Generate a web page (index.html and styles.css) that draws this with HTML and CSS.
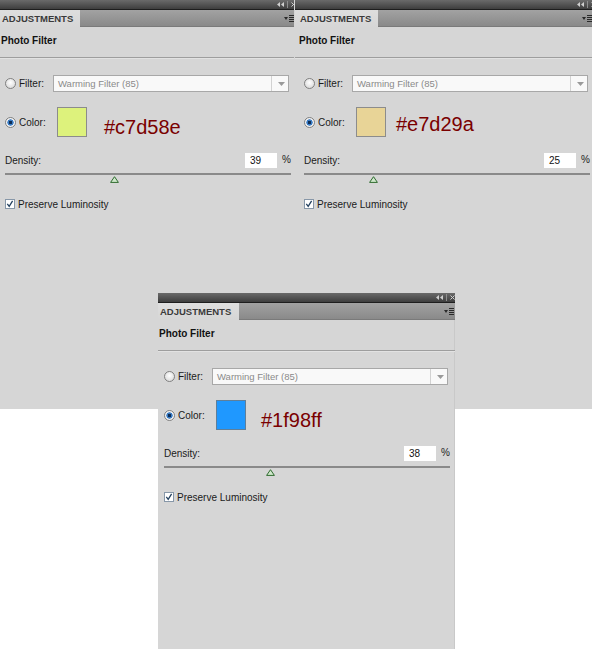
FILE: index.html
```html
<!DOCTYPE html>
<html>
<head>
<meta charset="utf-8">
<link rel="stylesheet" href="styles.css">
</head>
<body>
<div class="desk">
  <div class="top">
    <section class="panel panel--a">
      <div class="titlebar">
        <span class="tb-icons">
          <svg class="ico-collapse" width="7" height="5" viewBox="0 0 7 5"><polygon points="0,2.5 3,0 3,5"/><polygon points="4,2.5 7,0 7,5"/></svg>
          <span class="tb-sep"></span>
          <svg class="ico-close" width="5" height="5" viewBox="0 0 5 5"><path d="M0.5 0.5 L4.5 4.5 M4.5 0.5 L0.5 4.5"/></svg>
        </span>
      </div>
      <div class="tabrow">
        <div class="tab">ADJUSTMENTS</div>
        <div class="tabfill">
          <svg class="ico-menu" width="10" height="9" viewBox="0 0 10 9"><polygon points="0,3 4,3 2,6" class="m-tri"/><rect x="5" y="1" width="5" height="1"/><rect x="5" y="3" width="5" height="1"/><rect x="5" y="5" width="5" height="1"/><rect x="5" y="7" width="5" height="1"/></svg>
        </div>
      </div>
      <div class="head"><div class="title">Photo Filter</div></div>
      <div class="rule"></div>
      <div class="body">
        <div class="row row--filter">
          <span class="radio"></span><span class="label">Filter:</span>
          <div class="select"><span class="select-text">Warming Filter (85)</span><span class="select-arrow"><svg width="7" height="4" viewBox="0 0 7 4"><polygon points="0,0 7,0 3.5,4"/></svg></span></div>
        </div>
        <div class="row row--color">
          <span class="radio radio--on"></span><span class="label">Color:</span>
          <span class="swatch swatch--lime"></span>
          <span class="hex hex--a">#c7d58e</span>
        </div>
        <div class="row row--density">
          <span class="dens-label">Density:</span>
          <span class="dens-input">39</span>
          <span class="pct">%</span>
        </div>
        <div class="slider"><svg class="thumb" style="left:calc(39% - 7px)" width="9" height="7" viewBox="0 0 9 7"><polygon points="4.5,0.7 8.4,6.4 0.6,6.4"/></svg></div>
        <div class="row row--check">
          <span class="check"><svg width="8" height="8" viewBox="0 0 8 8"><path d="M1.3 3.8 L3.2 6.3 L6.6 0.8"/></svg></span>
          <span class="check-label">Preserve Luminosity</span>
        </div>
      </div>
    </section>

    <section class="panel panel--b">
      <div class="titlebar">
        <span class="tb-icons">
          <svg class="ico-collapse" width="7" height="5" viewBox="0 0 7 5"><polygon points="0,2.5 3,0 3,5"/><polygon points="4,2.5 7,0 7,5"/></svg>
          <span class="tb-sep"></span>
          <svg class="ico-close" width="5" height="5" viewBox="0 0 5 5"><path d="M0.5 0.5 L4.5 4.5 M4.5 0.5 L0.5 4.5"/></svg>
        </span>
      </div>
      <div class="tabrow">
        <div class="tab">ADJUSTMENTS</div>
        <div class="tabfill">
          <svg class="ico-menu" width="10" height="9" viewBox="0 0 10 9"><polygon points="0,3 4,3 2,6" class="m-tri"/><rect x="5" y="1" width="5" height="1"/><rect x="5" y="3" width="5" height="1"/><rect x="5" y="5" width="5" height="1"/><rect x="5" y="7" width="5" height="1"/></svg>
        </div>
      </div>
      <div class="head"><div class="title">Photo Filter</div></div>
      <div class="rule"></div>
      <div class="body">
        <div class="row row--filter">
          <span class="radio"></span><span class="label">Filter:</span>
          <div class="select"><span class="select-text">Warming Filter (85)</span><span class="select-arrow"><svg width="7" height="4" viewBox="0 0 7 4"><polygon points="0,0 7,0 3.5,4"/></svg></span></div>
        </div>
        <div class="row row--color">
          <span class="radio radio--on"></span><span class="label">Color:</span>
          <span class="swatch swatch--sand"></span>
          <span class="hex hex--b">#e7d29a</span>
        </div>
        <div class="row row--density">
          <span class="dens-label">Density:</span>
          <span class="dens-input">25</span>
          <span class="pct">%</span>
        </div>
        <div class="slider"><svg class="thumb" style="left:calc(25% - 7px)" width="9" height="7" viewBox="0 0 9 7"><polygon points="4.5,0.7 8.4,6.4 0.6,6.4"/></svg></div>
        <div class="row row--check">
          <span class="check"><svg width="8" height="8" viewBox="0 0 8 8"><path d="M1.3 3.8 L3.2 6.3 L6.6 0.8"/></svg></span>
          <span class="check-label">Preserve Luminosity</span>
        </div>
      </div>
    </section>
  </div>

  <section class="panel panel--c">
    <div class="titlebar">
      <span class="tb-icons">
        <svg class="ico-collapse" width="7" height="5" viewBox="0 0 7 5"><polygon points="0,2.5 3,0 3,5"/><polygon points="4,2.5 7,0 7,5"/></svg>
        <span class="tb-sep"></span>
        <svg class="ico-close" width="5" height="5" viewBox="0 0 5 5"><path d="M0.5 0.5 L4.5 4.5 M4.5 0.5 L0.5 4.5"/></svg>
      </span>
    </div>
    <div class="tabrow">
      <div class="tab">ADJUSTMENTS</div>
      <div class="tabfill">
        <svg class="ico-menu" width="10" height="9" viewBox="0 0 10 9"><polygon points="0,3 4,3 2,6" class="m-tri"/><rect x="5" y="1" width="5" height="1"/><rect x="5" y="3" width="5" height="1"/><rect x="5" y="5" width="5" height="1"/><rect x="5" y="7" width="5" height="1"/></svg>
      </div>
    </div>
    <div class="head"><div class="title">Photo Filter</div></div>
    <div class="rule"></div>
    <div class="body">
      <div class="row row--filter">
        <span class="radio"></span><span class="label">Filter:</span>
        <div class="select"><span class="select-text">Warming Filter (85)</span><span class="select-arrow"><svg width="7" height="4" viewBox="0 0 7 4"><polygon points="0,0 7,0 3.5,4"/></svg></span></div>
      </div>
      <div class="row row--color">
        <span class="radio radio--on"></span><span class="label">Color:</span>
        <span class="swatch swatch--blue"></span>
        <span class="hex hex--c">#1f98ff</span>
      </div>
      <div class="row row--density">
        <span class="dens-label">Density:</span>
        <span class="dens-input">38</span>
        <span class="pct">%</span>
      </div>
      <div class="slider"><svg class="thumb" style="left:calc(38% - 7px)" width="9" height="7" viewBox="0 0 9 7"><polygon points="4.5,0.7 8.4,6.4 0.6,6.4"/></svg></div>
      <div class="row row--check">
        <span class="check"><svg width="8" height="8" viewBox="0 0 8 8"><path d="M1.3 3.8 L3.2 6.3 L6.6 0.8"/></svg></span>
        <span class="check-label">Preserve Luminosity</span>
      </div>
    </div>
  </section>
</div>
</body>
</html>
```

FILE: styles.css
```css
html, body {
  margin: 0;
  padding: 0;
  background: #ffffff;
}
body {
  font-family: "Liberation Sans", Arial, sans-serif;
  font-size: 10px;
  color: #1c1c1c;
}
.desk {
  position: relative;
  width: 592px;
  height: 649px;
  overflow: hidden;
}
.top {
  display: flex;
  height: 409px;
  background: #d6d6d6;
}
.panel {
  flex: none;
  background: #d6d6d6;
  overflow: hidden;
}
.panel--a { width: 294px; }
.panel--b { width: 297px; margin-left: 1px; }
.panel--c {
  position: absolute;
  left: 158px;
  top: 293px;
  width: 297px;
  height: 356px;
  box-shadow: inset -1px 0 0 #c9c9c9;
}

/* title bar */
.titlebar {
  height: 9px;
  border-bottom: 1px solid #1e1e1e;
  background: linear-gradient(#6a6a6a, #3e3e3e);
  display: flex;
  align-items: center;
}
.tb-icons {
  display: flex;
  align-items: center;
  gap: 3px;
  margin-left: 277px;
}
.panel--b .tb-icons { margin-left: 282px; }
.panel--c .tb-icons { margin-left: 278px; }
.ico-collapse { fill: #d0d0d0; display: block; }
.tb-sep { width: 1px; height: 7px; background: #8e8e8e; }
.ico-close { stroke: #d0d0d0; stroke-width: 1; fill: none; display: block; }

/* tab row */
.tabrow {
  height: 17px;
  display: flex;
}
.tab {
  width: 80px;
  box-sizing: border-box;
  padding: 2px 0 0 2px;
  line-height: 14px;
  background: linear-gradient(#dedede, #d6d6d6);
  font-weight: bold;
  font-size: 9.5px;
  color: #3a3a3a;
  white-space: nowrap;
  flex: none;
}
.panel--b .tab { width: 83px; padding-left: 5px; }
.panel--c .tab { width: 81px; }
.tabfill {
  flex: 1;
  background: linear-gradient(#a2a2a2, #888888);
  box-shadow: inset 0 -1px 0 #7a7a7a;
  display: flex;
  align-items: center;
}
.ico-menu {
  margin-left: auto;
  margin-right: 0;
  fill: #2a2a2a;
  display: block;
}
.panel--c .ico-menu { margin-right: 1px; }

/* heading */
.head { padding-left: 1px; }
.panel--b .head { padding-left: 4px; }
.panel--c .head { padding-left: 1px; }
.title {
  font-weight: bold;
  font-size: 10px;
  line-height: 13px;
  color: #111;
  padding: 7px 0 10px;
}
.rule {
  height: 1px;
  background: #9e9e9e;
  box-shadow: 0 1px 0 #e2e2e2;
}

/* body */
.body {
  padding: 17px 0 0 5px;
}
.panel--b .body { padding-left: 9px; }
.panel--c .body { padding-left: 6px; }

.row {
  display: flex;
  align-items: center;
}
.row--filter { height: 17px; }
.radio {
  flex: none;
  width: 11px;
  height: 11px;
  box-sizing: border-box;
  border-radius: 50%;
  border: 1px solid #808080;
  background: radial-gradient(circle at 50% 40%, #ffffff, #d2d2d2);
  margin-right: 3px;
}
.radio--on {
  background: radial-gradient(circle, #0e2d55 0, #0e2d55 1.4px, #3a7cc4 2px, #3a7cc4 2.9px, #f2f2f2 3.4px);
}
.label {
  flex: none;
  width: 34px;
  color: #1a1a1a;
}
.select {
  width: 236px;
  height: 17px;
  box-sizing: border-box;
  border: 1px solid #a8a8a8;
  background: #f9f9f9;
  display: flex;
}
.select-text {
  flex: 1;
  padding-left: 4px;
  color: #8a8a8a;
  font-size: 9.5px;
  line-height: 15px;
  border-right: 1px solid #d2d2d2;
  white-space: nowrap;
}
.select-arrow {
  width: 16px;
  display: flex;
  align-items: center;
  justify-content: center;
  fill: #9a9a9a;
}
.select-arrow svg { display: block; margin-left: 2px; }

.row--color { height: 30px; margin-top: 15px; }
.swatch {
  flex: none;
  width: 30px;
  height: 30px;
  box-sizing: border-box;
  border: 1px solid #8c8c8c;
  margin-left: 4px;
}
.swatch--lime { background: #ddf27c; }
.swatch--sand { background: #e8d497; }
.swatch--blue { background: #1f98ff; border-color: #5f7f9a; }
.hex {
  align-self: flex-start;
  font-size: 20px;
  line-height: 20px;
  color: #7a0000;
  white-space: nowrap;
}
.hex--a { margin: 10px 0 0 17px; }
.hex--b { margin: 7px 0 0 10px; }
.hex--c { margin: 10px 0 0 15px; }

.row--density {
  width: 286px;
  height: 15px;
  margin-top: 16px;
}
.dens-label { color: #1a1a1a; }
.dens-input {
  margin-left: auto;
  width: 32px;
  height: 15px;
  box-sizing: border-box;
  padding-left: 5px;
  line-height: 15px;
  background: #ffffff;
  color: #111;
}
.pct {
  width: 9px;
  margin-left: 5px;
  margin-top: -2px;
}

.slider {
  position: relative;
  width: 286px;
  height: 2px;
  margin-top: 5px;
  background: #8a8a8a;
}
.thumb {
  position: absolute;
  top: 3px;
  display: block;
  fill: #cfe8cb;
  stroke: #2e6b2e;
  stroke-width: 1;
}

.row--check {
  height: 10px;
  margin-top: 24px;
}
.check {
  flex: none;
  width: 10px;
  height: 10px;
  box-sizing: border-box;
  border: 1px solid #8797a8;
  background: #ffffff;
  margin-right: 3px;
  display: flex;
  align-items: center;
  justify-content: center;
}
.check svg {
  display: block;
  fill: none;
  stroke: #23405f;
  stroke-width: 1.3;
}
.check-label { color: #1a1a1a; white-space: nowrap; }
```
